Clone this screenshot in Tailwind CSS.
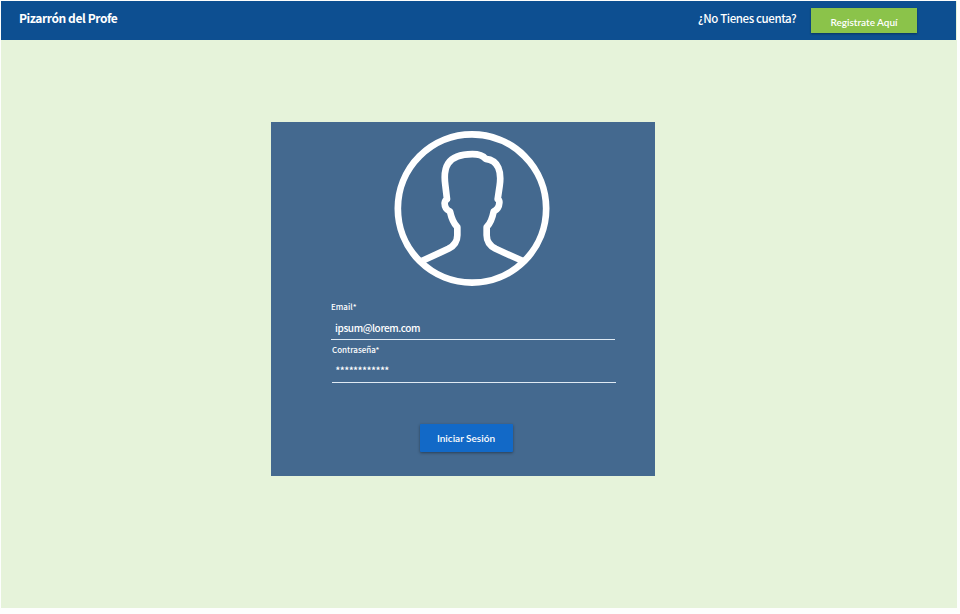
<!DOCTYPE html>
<html lang="es">
<head>
<meta charset="utf-8">
<title>Pizarrón del Profe</title>
<script src="https://cdn.jsdelivr.net/npm/@tailwindcss/browser@4"></script>
</head>
<body class="h-[614px] overflow-hidden bg-[#fdfefd] pt-px pl-px font-['Noto_Sans_CJK_SC',sans-serif] text-white">
<div class="flex h-[607px] w-[956px] flex-col bg-[#e6f3da]">
  <header class="mr-px flex h-[39px] shrink-0 items-start bg-[#0d4f91] pl-[18px] pr-[39px]">
    <h1 class="mt-[9px] text-[12px] leading-4 font-bold tracking-[-0.42px] whitespace-nowrap">Pizarrón del Profe</h1>
    <p class="mt-[9px] ml-auto w-[98px] text-[11.5px] leading-4 font-medium tracking-[-0.4px] whitespace-nowrap">¿No Tienes cuenta?</p>
    <a class="mt-[7px] ml-[15px] flex h-[25px] w-[106px] items-center justify-center bg-[#8bc34a] pt-[3px] font-['Lato',sans-serif] text-[10px] font-semibold whitespace-nowrap shadow-[0_1px_2px_rgba(0,0,0,0.35)]">Registrate Aquí</a>
  </header>
  <main class="mt-[82px] ml-[270px] flex h-[354px] w-[384px] flex-col bg-[#44698f]">
    <svg class="mt-[8px] ml-[122px] h-[158px] w-[158px] shrink-0" viewBox="24 29.5 474 474" fill="none" stroke="#fff" stroke-width="20" stroke-linejoin="round">
      <circle cx="261" cy="265" r="222.5"/>
      <path d="M112 422L190 386Q217 372 217 345L217 321Q202 306 195 274Q178 266 179 248Q180 240 186 237L181 195C174 145 184 102 262 102C283 102 293 105 302 116C341 120 350 155 344 197L338 237Q344 240 343 248Q342 266 326 274Q320 306 305 321L305 345Q305 372 332 386L412 422"/>
    </svg>
    <form class="flex flex-col pl-[60px]">
      <label class="mt-[13px] block h-3 text-[8px] leading-3 font-medium">Email*</label>
      <div class="mt-[5px] flex h-[22px] w-[284px] border-b border-[#dfeaf4] pl-[4px] text-[10px] leading-[19px] font-medium tracking-[-0.38px]">ipsum@lorem.com</div>
      <label class="mt-[4px] ml-px block h-3 text-[8px] leading-3 font-medium">Contraseña*</label>
      <div class="mt-[4px] ml-px flex h-[23px] w-[284px] border-b border-[#dfeaf4] pl-[3.5px] text-[9px] leading-[22px] font-bold tracking-[-0.1px]">************</div>
      <button type="button" class="mt-[41px] ml-[89px] h-[28px] w-[93px] rounded-[1px] bg-[#1269c7] pr-px font-['Lato',sans-serif] text-[10px] font-semibold whitespace-nowrap shadow-[0_1px_3px_rgba(0,0,0,0.4)]">Iniciar Sesión</button>
    </form>
  </main>
</div>
</body>
</html>
